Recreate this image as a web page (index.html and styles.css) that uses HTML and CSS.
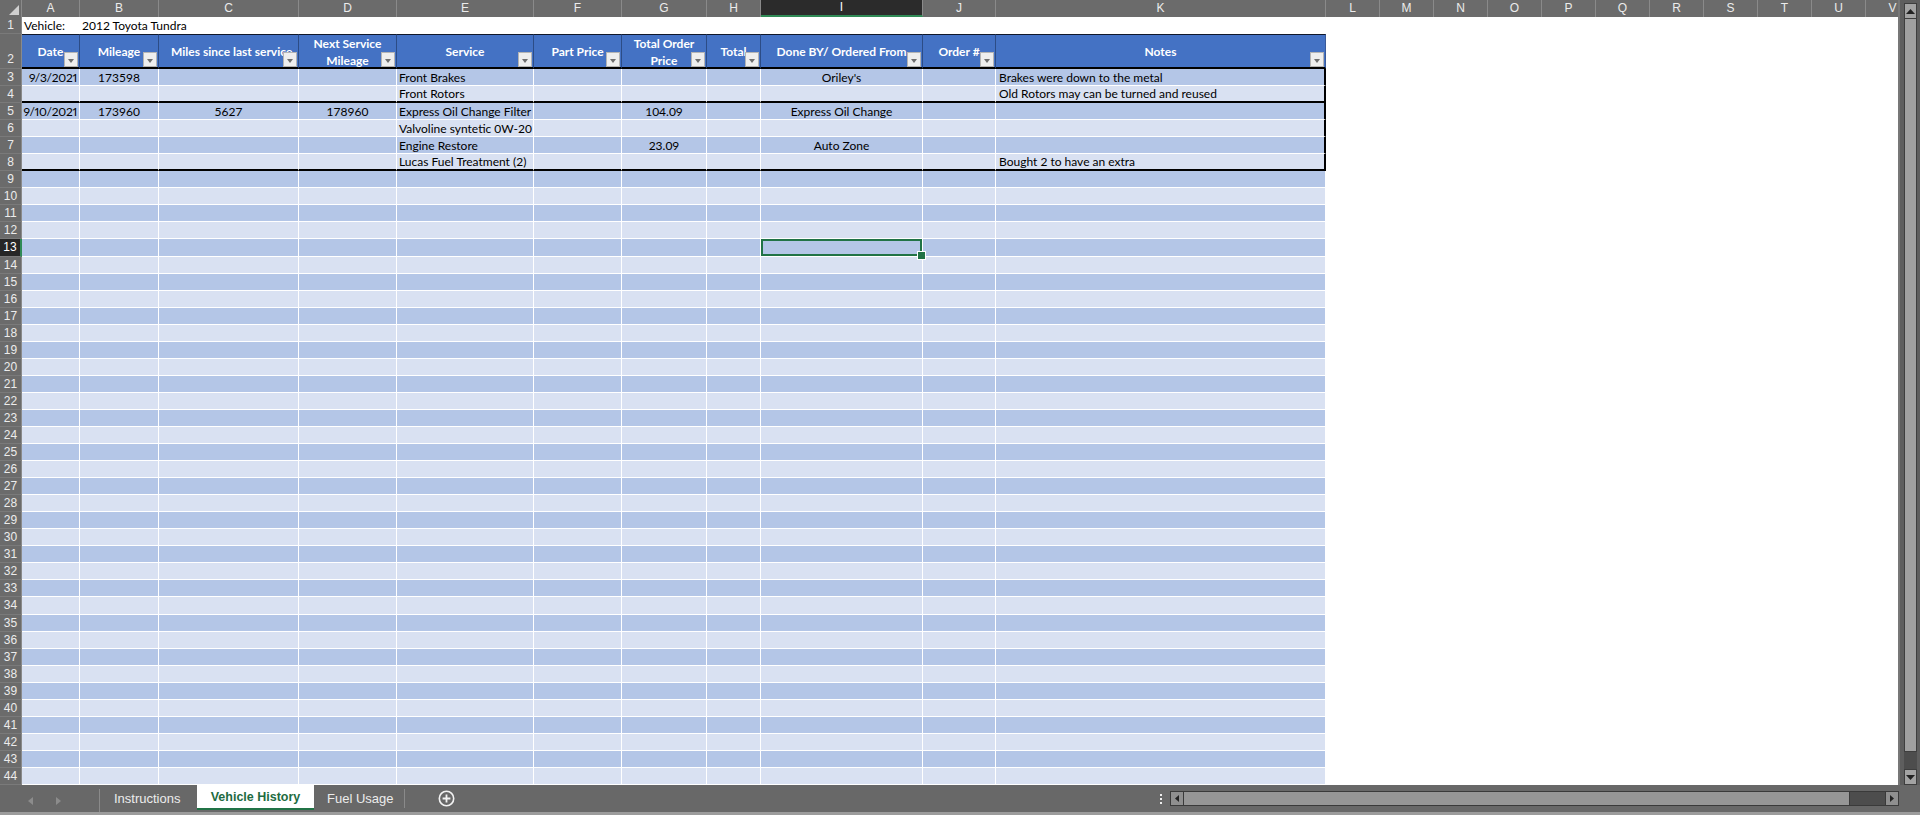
FILE: index.html
```html
<!DOCTYPE html>
<html>
<head>
<meta charset="utf-8">
<title>Vehicle History</title>
<link rel="stylesheet" href="styles.css">
</head>
<body>
<div class="app">
  <div class="main">
    <div class="sheet">
      <div class="r ch">
        <span class="corner"></span><span>A</span><span>B</span><span>C</span><span>D</span><span>E</span><span>F</span><span>G</span><span>H</span><span class="csel">I</span><span>J</span><span>K</span><span>L</span><span>M</span><span>N</span><span>O</span><span>P</span><span>Q</span><span>R</span><span>S</span><span>T</span><span>U</span><span>V</span>
      </div>
      <div class="r r1"><span class="h">1</span><span class="l">Vehicle:</span><span class="l ov">2012 Toyota Tundra</span></div>
      <div class="r r2">
        <span class="h h2">2</span>
        <span class="th"><b>Date</b><i class="fb"></i></span>
        <span class="th"><b>Mileage</b><i class="fb"></i></span>
        <span class="th tl"><b>Miles since last service</b><i class="fb"></i></span>
        <span class="th"><b>Next Service<br>Mileage</b><i class="fb"></i></span>
        <span class="th"><b>Service</b><i class="fb"></i></span>
        <span class="th"><b>Part Price</b><i class="fb"></i></span>
        <span class="th"><b>Total Order<br>Price</b><i class="fb"></i></span>
        <span class="th"><b>Total</b><i class="fb"></i></span>
        <span class="th"><b>Done BY/ Ordered From</b><i class="fb"></i></span>
        <span class="th"><b>Order #</b><i class="fb"></i></span>
        <span class="th thk"><b>Notes</b><i class="fb"></i></span>
      </div>
      <div class="r b o"><span class="h">3</span><span class="rt">9/3/2021</span><span class="c">173598</span><span></span><span></span><span class="l">Front Brakes</span><span></span><span></span><span></span><span class="c">Oriley's</span><span></span><span class="l k">Brakes were down to the metal</span></div>
      <div class="r b e gb"><span class="h">4</span><span></span><span></span><span></span><span></span><span class="l">Front Rotors</span><span></span><span></span><span></span><span></span><span></span><span class="l k">Old Rotors may can be turned and reused</span></div>
      <div class="r b o"><span class="h">5</span><span class="rt">9/10/2021</span><span class="c">173960</span><span class="c">5627</span><span class="c">178960</span><span class="l">Express Oil Change Filter</span><span></span><span class="c">104.09</span><span></span><span class="c">Express Oil Change</span><span></span><span class="l k"></span></div>
      <div class="r b e"><span class="h">6</span><span></span><span></span><span></span><span></span><span class="l">Valvoline syntetic 0W-20</span><span></span><span></span><span></span><span></span><span></span><span class="l k"></span></div>
      <div class="r b o"><span class="h">7</span><span></span><span></span><span></span><span></span><span class="l">Engine Restore</span><span></span><span class="c">23.09</span><span></span><span class="c">Auto Zone</span><span></span><span class="l k"></span></div>
      <div class="r b e gb"><span class="h">8</span><span></span><span></span><span></span><span></span><span class="l">Lucas Fuel Treatment (2)</span><span></span><span></span><span></span><span></span><span></span><span class="l k">Bought 2 to have an extra</span></div>
      <div class="r b o"><span class="h">9</span><span></span><span></span><span></span><span></span><span></span><span></span><span></span><span></span><span></span><span></span><span></span></div>
      <div class="r b e"><span class="h">10</span><span></span><span></span><span></span><span></span><span></span><span></span><span></span><span></span><span></span><span></span><span></span></div>
      <div class="r b o"><span class="h">11</span><span></span><span></span><span></span><span></span><span></span><span></span><span></span><span></span><span></span><span></span><span></span></div>
      <div class="r b e"><span class="h">12</span><span></span><span></span><span></span><span></span><span></span><span></span><span></span><span></span><span></span><span></span><span></span></div>
      <div class="r b o"><span class="h hsel">13</span><span></span><span></span><span></span><span></span><span></span><span></span><span></span><span></span><span class="sel"></span><span></span><span></span></div>
      <div class="r b e"><span class="h">14</span><span></span><span></span><span></span><span></span><span></span><span></span><span></span><span></span><span></span><span></span><span></span></div>
      <div class="r b o"><span class="h">15</span><span></span><span></span><span></span><span></span><span></span><span></span><span></span><span></span><span></span><span></span><span></span></div>
      <div class="r b e"><span class="h">16</span><span></span><span></span><span></span><span></span><span></span><span></span><span></span><span></span><span></span><span></span><span></span></div>
      <div class="r b o"><span class="h">17</span><span></span><span></span><span></span><span></span><span></span><span></span><span></span><span></span><span></span><span></span><span></span></div>
      <div class="r b e"><span class="h">18</span><span></span><span></span><span></span><span></span><span></span><span></span><span></span><span></span><span></span><span></span><span></span></div>
      <div class="r b o"><span class="h">19</span><span></span><span></span><span></span><span></span><span></span><span></span><span></span><span></span><span></span><span></span><span></span></div>
      <div class="r b e"><span class="h">20</span><span></span><span></span><span></span><span></span><span></span><span></span><span></span><span></span><span></span><span></span><span></span></div>
      <div class="r b o"><span class="h">21</span><span></span><span></span><span></span><span></span><span></span><span></span><span></span><span></span><span></span><span></span><span></span></div>
      <div class="r b e"><span class="h">22</span><span></span><span></span><span></span><span></span><span></span><span></span><span></span><span></span><span></span><span></span><span></span></div>
      <div class="r b o"><span class="h">23</span><span></span><span></span><span></span><span></span><span></span><span></span><span></span><span></span><span></span><span></span><span></span></div>
      <div class="r b e"><span class="h">24</span><span></span><span></span><span></span><span></span><span></span><span></span><span></span><span></span><span></span><span></span><span></span></div>
      <div class="r b o"><span class="h">25</span><span></span><span></span><span></span><span></span><span></span><span></span><span></span><span></span><span></span><span></span><span></span></div>
      <div class="r b e"><span class="h">26</span><span></span><span></span><span></span><span></span><span></span><span></span><span></span><span></span><span></span><span></span><span></span></div>
      <div class="r b o"><span class="h">27</span><span></span><span></span><span></span><span></span><span></span><span></span><span></span><span></span><span></span><span></span><span></span></div>
      <div class="r b e"><span class="h">28</span><span></span><span></span><span></span><span></span><span></span><span></span><span></span><span></span><span></span><span></span><span></span></div>
      <div class="r b o"><span class="h">29</span><span></span><span></span><span></span><span></span><span></span><span></span><span></span><span></span><span></span><span></span><span></span></div>
      <div class="r b e"><span class="h">30</span><span></span><span></span><span></span><span></span><span></span><span></span><span></span><span></span><span></span><span></span><span></span></div>
      <div class="r b o"><span class="h">31</span><span></span><span></span><span></span><span></span><span></span><span></span><span></span><span></span><span></span><span></span><span></span></div>
      <div class="r b e"><span class="h">32</span><span></span><span></span><span></span><span></span><span></span><span></span><span></span><span></span><span></span><span></span><span></span></div>
      <div class="r b o"><span class="h">33</span><span></span><span></span><span></span><span></span><span></span><span></span><span></span><span></span><span></span><span></span><span></span></div>
      <div class="r b e"><span class="h">34</span><span></span><span></span><span></span><span></span><span></span><span></span><span></span><span></span><span></span><span></span><span></span></div>
      <div class="r b o"><span class="h">35</span><span></span><span></span><span></span><span></span><span></span><span></span><span></span><span></span><span></span><span></span><span></span></div>
      <div class="r b e"><span class="h">36</span><span></span><span></span><span></span><span></span><span></span><span></span><span></span><span></span><span></span><span></span><span></span></div>
      <div class="r b o"><span class="h">37</span><span></span><span></span><span></span><span></span><span></span><span></span><span></span><span></span><span></span><span></span><span></span></div>
      <div class="r b e"><span class="h">38</span><span></span><span></span><span></span><span></span><span></span><span></span><span></span><span></span><span></span><span></span><span></span></div>
      <div class="r b o"><span class="h">39</span><span></span><span></span><span></span><span></span><span></span><span></span><span></span><span></span><span></span><span></span><span></span></div>
      <div class="r b e"><span class="h">40</span><span></span><span></span><span></span><span></span><span></span><span></span><span></span><span></span><span></span><span></span><span></span></div>
      <div class="r b o"><span class="h">41</span><span></span><span></span><span></span><span></span><span></span><span></span><span></span><span></span><span></span><span></span><span></span></div>
      <div class="r b e"><span class="h">42</span><span></span><span></span><span></span><span></span><span></span><span></span><span></span><span></span><span></span><span></span><span></span></div>
      <div class="r b o"><span class="h">43</span><span></span><span></span><span></span><span></span><span></span><span></span><span></span><span></span><span></span><span></span><span></span></div>
      <div class="r b e"><span class="h">44</span><span></span><span></span><span></span><span></span><span></span><span></span><span></span><span></span><span></span><span></span><span></span></div>
    </div>
    <div class="vs">
      <div class="sbtn"><svg width="9" height="5" viewBox="0 0 9 5"><path d="M0 5 L4.5 0 L9 5 Z" fill="#222"/></svg></div>
      <div class="vthumb"></div>
      <div class="vtrack"></div>
      <div class="sbtn"><svg width="9" height="5" viewBox="0 0 9 5"><path d="M0 0 L4.5 5 L9 0 Z" fill="#222"/></svg></div>
    </div>
  </div>
  <div class="tabbar">
    <div class="nav">
      <svg class="arr" width="5" height="8" viewBox="0 0 5 8"><path d="M5 0 L0 4 L5 8 Z" fill="#8c8c8c"/></svg>
      <svg class="arr" width="5" height="8" viewBox="0 0 5 8"><path d="M0 0 L5 4 L0 8 Z" fill="#8c8c8c"/></svg>
    </div>
    <div class="tab t1">Instructions</div>
    <div class="tab active">Vehicle History</div>
    <div class="tab t3">Fuel Usage</div>
    <div class="add"><svg width="17" height="17" viewBox="0 0 17 17"><circle cx="8.5" cy="8.5" r="7.2" fill="none" stroke="#f2f2f2" stroke-width="1.6"/><path d="M8.5 4.6 V12.4 M4.6 8.5 H12.4" stroke="#f2f2f2" stroke-width="1.8"/></svg></div>
    <div class="spacer"></div>
    <div class="dots"><i></i><i></i><i></i></div>
    <div class="hs">
      <div class="hbtn"><svg width="4" height="7" viewBox="0 0 4 7"><path d="M4 0 L0 3.5 L4 7 Z" fill="#222"/></svg></div>
      <div class="hthumb"></div>
      <div class="htrack"></div>
      <div class="hbtn"><svg width="4" height="7" viewBox="0 0 4 7"><path d="M0 0 L4 3.5 L0 7 Z" fill="#222"/></svg></div>
    </div>
  </div>
</div>
</body>
</html>
```

FILE: styles.css
```css
* { box-sizing: border-box; margin: 0; padding: 0; }
html, body { width: 1920px; height: 815px; overflow: hidden; background: #686868; }
body { font-family: Lato, "Liberation Sans", Arial, sans-serif; font-size: 12px; color: #000; }

.app { width: 1920px; height: 815px; display: flex; flex-direction: column; }
.main { height: 785px; display: flex; }
.sheet { width: 1898px; height: 785px; overflow: hidden; background: #fff; }

.r {
  display: grid;
  grid-template-columns: 22px 58px 79px 140px 98px 137px 88px 85px 54px 162px 73px 330px repeat(11, 54px);
  height: 17px;
}
.r.b { height: 17.05px; }
.r > span { display: block; white-space: nowrap; overflow: hidden; line-height: 16px; }
.b > span:not(.h) { padding-top: 1px; line-height: 15px; }

/* column letters */
.ch > span {
  background: #6b6b6b; color: #ececec; text-align: center; line-height: 17px;
  border-right: 1px solid #8a8a8a; font-family: "Liberation Sans", Arial, sans-serif; font-size: 12px;
}
.ch > span.csel { background: #2b2b2b; color: #fff; border-bottom: 2px solid #2f8a55; line-height: 15px; }
.ch > .corner { position: relative; }
.ch > .corner::after {
  content: ""; position: absolute; right: 2px; bottom: 2px;
  border-style: solid; border-width: 0 0 10px 10px; border-color: transparent transparent #cfcfcf transparent;
}

/* row numbers */
.r > span.h {
  background: #6b6b6b; color: #ececec; text-align: center; padding: 0;
  border-right: 1px solid #8a8a8a; border-bottom: 1px solid #7a7a7a;
  font-family: "Liberation Sans", Arial, sans-serif; font-size: 12px; line-height: 16px;
}
.r > span.h2 { display: flex; align-items: flex-end; justify-content: center; padding-bottom: 1px; }
.r > span.hsel { background: #262626; color: #fff; border-right: 2px solid #2f8a55; }

/* row 1 */
.r1 > span.l { padding-left: 2px; line-height: 17px; }
.r1 > span.ov { overflow: visible; padding-left: 3px; }

/* header row */
.r2 { height: 35px; }
.r2 > span.th {
  position: relative; background: #4472c4; color: #fff;
  border-top: 1px solid #10182a; border-bottom: 2px solid #000; border-right: 1px solid #2c4c86;
  display: flex; align-items: center; justify-content: center; text-align: center;
  line-height: 17px; font-size: 12px; padding-top: 1px;
}
.r2 > span.thk { border-right: 1px solid #3a5a99; }
.r2 > span.th b { font-weight: 700; }
.r2 > span.tl { justify-content: flex-start; padding-left: 12px; }
.fb {
  position: absolute; right: 1px; bottom: 0; width: 14px; height: 15px;
  background: #eeeeee; border: 1px solid #b4b4b4;
}
.fb::after {
  content: ""; position: absolute; left: 3px; top: 6px;
  border-style: solid; border-width: 4px 3.5px 0 3.5px; border-color: #6e6e6e transparent transparent transparent;
}

/* body rows */
.b > span { border-right: 1px solid #fff; border-bottom: 1px solid #fff; }
.o > span:not(.h) { background: #b4c6e7; }
.e > span:not(.h) { background: #d9e1f2; }
.gb > span:not(.h) { border-bottom: 2px solid #000; line-height: 14px; }
.r > span.k { border-right: 2px solid #000; }
.r > span.l { padding-left: 2px; }
.r > span.k.l { padding-left: 3px; }
.r > span.c { text-align: center; }
.r > span.rt { text-align: right; padding-right: 2px; letter-spacing: -0.25px; font-variant-numeric: proportional-nums; }

.r > span.sel { position: relative; overflow: visible; box-shadow: inset 0 0 0 2px #217346; }
.r > span.sel::after {
  content: ""; position: absolute; right: -4px; bottom: -4px; width: 7px; height: 7px;
  background: #217346; border: 1px solid #fff; z-index: 3;
}

/* vertical scrollbar */
.vs {
  width: 22px; height: 785px; background: #5e5e5e;
  padding: 3px 3px 0 4px; display: flex; flex-direction: column;
  border-left: 2px solid #777;
}
.sbtn {
  height: 16px; background: #a3a3a3; border: 1px solid #3e3e3e;
  display: flex; align-items: center; justify-content: center;
}
.vthumb { height: 733px; background: #a0a0a0; border: 1px solid #3e3e3e; border-top: none; }
.vtrack { height: 17px; background: #4d4d4d; }

/* tab bar */
.tabbar {
  height: 30px; display: flex; align-items: stretch; background: #686868;
  border-bottom: 3px solid #9c9c9c;
  font-family: "Liberation Sans", Arial, sans-serif; font-size: 13px;
}
.nav { width: 100px; display: flex; align-items: center; padding-left: 28px; gap: 23px; border-right: 1px solid #8a8a8a; margin: 4px 0 0; }
.tab { display: flex; align-items: center; color: #ececec; white-space: nowrap; }
.t1 { width: 97px; padding-left: 14px; }
.active {
  width: 117px; justify-content: center; background: #fff; color: #1e6b41; font-weight: 700;
  border-bottom: 2px solid #217346; font-size: 12.5px; height: 25px;
}
.t3 { width: 91px; padding-left: 13px; position: relative; }
.t3::after { content: ""; position: absolute; right: 0; top: 4px; height: 19px; border-right: 1px solid #8a8a8a; }
.add { width: 83px; display: flex; align-items: center; justify-content: center; }
.spacer { flex: 1; }
.dots { width: 18px; display: flex; flex-direction: column; justify-content: center; align-items: center; gap: 2px; }
.dots i { display: block; width: 2px; height: 2px; background: #eee; }
.hs {
  width: 729px; height: 15px; align-self: center; margin-right: 21px;
  display: flex; border: 1px solid #3a3a3a; background: #4d4d4d;
}
.hbtn { width: 13px; background: #8f8f8f; display: flex; align-items: center; justify-content: center; border-right: 1px solid #3a3a3a; }
.hbtn:last-child { border-right: none; border-left: 1px solid #3a3a3a; }
.hthumb { width: 666px; background: #969696; border-right: 1px solid #3a3a3a; }
.htrack { flex: 1; background: #4d4d4d; }
```
